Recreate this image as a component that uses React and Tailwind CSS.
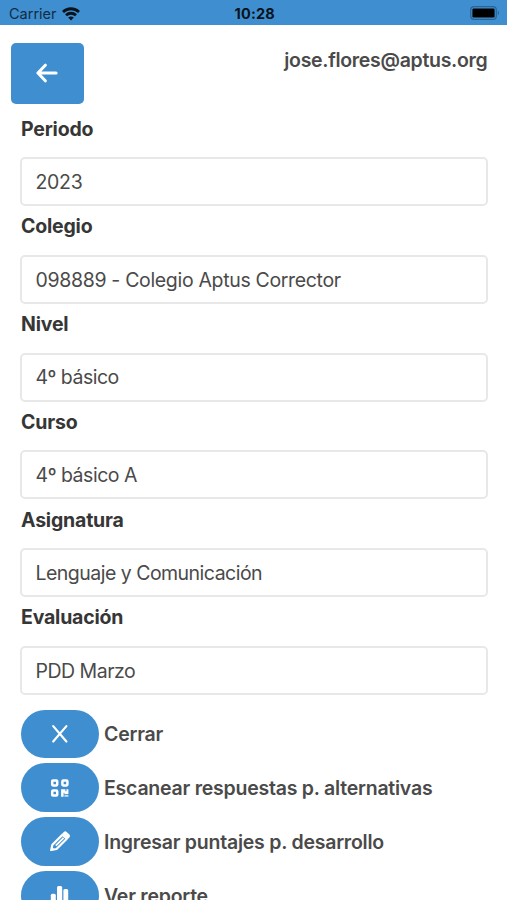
const fields = [
  { label: "Periodo", value: "2023", valueClass: "tracking-[-0.3px]" },
  { label: "Colegio", value: "098889 - Colegio Aptus Corrector", valueClass: "tracking-[-0.33px]" },
  { label: "Nivel", value: "4º básico", valueClass: "tracking-[-0.5px]" },
  { label: "Curso", value: "4º básico A", valueClass: "tracking-[-0.47px]" },
  { label: "Asignatura", value: "Lenguaje y Comunicación", valueClass: "tracking-[-0.52px]" },
  { label: "Evaluación", value: "PDD Marzo", valueClass: "tracking-[-0.5px]" },
];

const actions = [
  { text: "Cerrar", icon: <CloseIcon /> },
  { text: "Escanear respuestas p. alternativas", icon: <QrIcon /> },
  { text: "Ingresar puntajes p. desarrollo", icon: <PencilIcon /> },
  { text: "Ver reporte", icon: <ChartIcon /> },
];

function WifiIcon() {
  return (
    <svg width="18" height="14" viewBox="0 0 18 14" fill="none" stroke="#0a131b" strokeWidth="2.8">
      <path d="M1 4.9C5.4.7 12.6.7 17 4.9" />
      <path d="M4 8.2C6.8 5.6 11.2 5.6 14 8.2" />
      <path d="M9 13.4 6.2 10.6C7.8 9.2 10.2 9.2 11.8 10.6Z" fill="#0a131b" stroke="none" />
    </svg>
  );
}

function BatteryIcon() {
  return (
    <svg width="30" height="14" viewBox="0 0 30 14" fill="none">
      <rect x="0.7" y="0.7" width="25.6" height="12.6" rx="3.4" stroke="#2a6494" strokeWidth="1.2" />
      <rect x="2.4" y="2.4" width="22.2" height="9.2" rx="1.4" fill="#000" />
      <path d="M27.8 4.8c1.5.5 1.5 3.9 0 4.4Z" fill="#2a6494" />
    </svg>
  );
}

function ArrowLeftIcon() {
  return (
    <svg width="22" height="20" viewBox="0 0 22 20" fill="none" stroke="#fff" strokeWidth="3" strokeLinecap="round" strokeLinejoin="round">
      <path d="M9.3 2.2 1.9 10l7.4 7.8M2.5 10h17.6" />
    </svg>
  );
}

function CloseIcon() {
  return (
    <svg width="24" height="24" viewBox="0 0 24 24" fill="none" stroke="#fff" strokeWidth="2.2" strokeLinecap="round">
      <path d="M5.2 4.1 18.4 19.5M18.4 4.1 5.2 19.5" />
    </svg>
  );
}

function QrIcon() {
  return (
    <svg width="24" height="24" viewBox="0 0 24 24" fill="none" stroke="#fff" strokeWidth="2.5">
      <rect x="4.2" y="4.4" width="5" height="5" rx="0.8" />
      <rect x="14.4" y="4.4" width="5" height="5" rx="0.8" />
      <rect x="4.2" y="14.6" width="5" height="5" rx="0.8" />
      <path d="M13.1 13.3h4.3v2h1v-2h2v4.8h-4v-1.3h-.8v4h-2.5Z" fill="#fff" stroke="none" />
      <path d="M16.4 18.8h4v2h-4z" fill="#fff" opacity="0.7" stroke="none" />
    </svg>
  );
}

function PencilIcon() {
  return (
    <svg width="24" height="24" viewBox="0 0 24 24" fill="none" stroke="#fff" strokeLinejoin="round">
      <path d="m3.2 21 1.2-5.2L14.6 5.6l4.2 4.2L8.5 20Z" strokeWidth="2.2" />
      <path d="m7.8 16.6 7.8-7.8" strokeWidth="1.8" />
      <path d="m14.4 4.4 1.4-1.5c.8-.8 2-.9 2.9 0l2.7 2.7c.8.8.8 2.1 0 2.9L20 9.9Z" fill="#fff" stroke="none" />
      <path d="m2.6 21.7 1-4.2 3.2 3.2Z" fill="#fff" stroke="none" />
    </svg>
  );
}

function ChartIcon() {
  return (
    <svg width="24" height="24" viewBox="0 0 24 24" fill="#fff">
      <rect x="2.8" y="10.8" width="5" height="10.2" rx="1.5" />
      <rect x="9" y="3.1" width="5.2" height="17.9" rx="1.5" />
      <rect x="15.4" y="5.9" width="4.8" height="15.1" rx="1.5" />
    </svg>
  );
}

function StatusBar() {
  return (
    <div className="grid h-[25px] grid-cols-3 items-center bg-[#3e8ed0] pr-[6.5px] pl-[9px] leading-none text-[#0a131b]">
      <div className="flex items-center gap-[5px] pt-[2px]">
        <span className="pt-px text-[14.5px] text-[#122c42]">Carrier</span>
        <WifiIcon />
      </div>
      <div className="pt-[3px] text-center text-[14.5px] font-bold tracking-[0.2px]">10:28</div>
      <div className="flex justify-end pt-px">
        <BatteryIcon />
      </div>
    </div>
  );
}

export default function App() {
  return (
    <div className="h-[900px] overflow-hidden bg-white font-['Inter',sans-serif] text-[#4a4a4a]">
      <StatusBar />

      <header className="flex h-[90.5px] items-start justify-between pt-[18px] pr-[19.5px] pl-[11px]">
        <button className="flex h-[61px] w-[73px] items-center justify-center rounded-[5px] bg-[#3e8ed0] pr-px pb-[2px]">
          <ArrowLeftIcon />
        </button>
        <div className="pt-[2px] text-[19.5px] leading-[30px] font-semibold tracking-[-0.3px]">jose.flores@aptus.org</div>
      </header>

      <main className="pr-[19px] pl-5">
        {fields.map((field) => (
          <div key={field.label} className="h-[97.75px]">
            <label className="block h-[41.5px] pl-px text-[19.5px] leading-[26px] font-bold tracking-[-0.2px] text-[#363636]">
              {field.label}
            </label>
            <div className={`flex h-[49px] items-center rounded-[5px] border-2 border-[#e8e8e8] pt-[2px] pl-[13.5px] text-[19.5px] ${field.valueClass}`}>
              {field.value}
            </div>
          </div>
        ))}

        <div className="flex flex-col gap-[5px] pt-[7.5px] pl-[0.5px]">
          {actions.map((action) => (
            <div key={action.text} className="flex h-[48.8px] items-center gap-[5.5px]">
              <button className="flex h-full w-[78px] shrink-0 items-center justify-center rounded-full bg-[#3e8ed0]">
                {action.icon}
              </button>
              <span className="pt-[2px] text-[19.5px] font-semibold tracking-[-0.23px] whitespace-nowrap">{action.text}</span>
            </div>
          ))}
        </div>
      </main>
    </div>
  );
}
